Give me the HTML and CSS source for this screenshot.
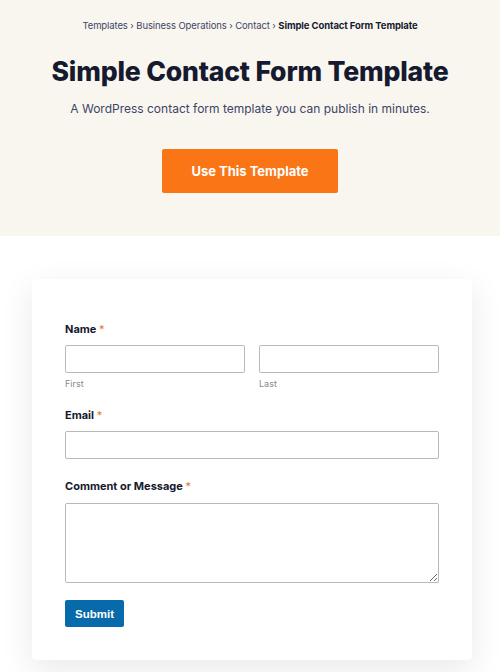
FILE: index.html
```html
<!DOCTYPE html>
<html lang="en">
<head>
<meta charset="utf-8">
<title>Simple Contact Form Template</title>
<link rel="stylesheet" href="styles.css">
</head>
<body>
<header class="hero">
  <nav class="crumbs">
    <a href="#">Templates</a> <span class="sep">›</span> <a href="#">Business Operations</a> <span class="sep">›</span> <a href="#">Contact</a> <span class="sep">›</span> <strong>Simple Contact Form Template</strong>
  </nav>
  <h1 class="title">Simple Contact Form Template</h1>
  <p class="lead">A WordPress contact form template you can publish in minutes.</p>
  <a class="cta" href="#">Use This Template</a>
</header>
<main class="stage">
  <form class="card">
    <div class="field field-name">
      <div class="label">Name <span class="req">*</span></div>
      <div class="row">
        <div class="col">
          <input class="input" type="text">
          <div class="sub">First</div>
        </div>
        <div class="col">
          <input class="input" type="text">
          <div class="sub">Last</div>
        </div>
      </div>
    </div>
    <div class="field field-email">
      <div class="label">Email <span class="req">*</span></div>
      <input class="input" type="email">
    </div>
    <div class="field">
      <div class="label label-area">Comment or Message <span class="req">*</span></div>
      <textarea class="input area"></textarea>
    </div>
    <button class="submit" type="button">Submit</button>
  </form>
</main>
</body>
</html>
```
FILE: styles.css
```css
* { box-sizing: border-box; }
html, body { margin: 0; padding: 0; }
body {
  font-family: Inter, "Liberation Sans", sans-serif;
  color: #161a2e;
  background: #ffffff;
}
.hero {
  background: #f9f6f0;
  height: 236px;
  display: flex;
  flex-direction: column;
  align-items: center;
  padding-top: 19px;
}
.crumbs {
  font-size: 9.5px;
  line-height: 14px;
  color: #3d4565;
  letter-spacing: -0.1px;
}
.crumbs a { color: #3d4565; text-decoration: none; }
.crumbs strong { color: #161a2e; font-weight: 700; }
.crumbs .sep { font-size: 9px; }
.title {
  margin: 22px 0 0;
  font-size: 26.6px;
  line-height: 32px;
  font-weight: 800;
  letter-spacing: -0.2px;
}
.lead {
  margin: 13px 0 0;
  font-size: 12px;
  line-height: 18px;
  color: #3d4565;
}
.cta {
  margin-top: 31px;
  width: 176px;
  height: 44px;
  display: flex;
  align-items: center;
  justify-content: center;
  background: #fa7516;
  color: #fff;
  border-radius: 2px;
  font-size: 13px;
  font-weight: 700;
  text-decoration: none;
}
.stage {
  padding: 43px 28px 40px 32px;
}
.card {
  width: 440px;
  height: 381px;
  background: #fff;
  border-radius: 4px;
  box-shadow: 0 10px 34px rgba(0,0,0,0.09);
  padding: 43px 33px 0 33px;
  display: flex;
  flex-direction: column;
}
.field { margin-bottom: 19px; }
.field-name { margin-bottom: 18px; }
.field-email { margin-bottom: 20px; }
.label {
  font-size: 11px;
  line-height: 14px;
  font-weight: 700;
  color: #161a2e;
  margin-bottom: 9px;
}
.label-area { margin-bottom: 10px; }
.req { color: #e27730; font-weight: 400; }
.row { display: grid; grid-template-columns: 180px 180px; column-gap: 14px; }
.input {
  display: block;
  width: 100%;
  height: 28px;
  border: 1px solid #b9b9b9;
  border-radius: 2px;
  background: #fff;
  margin: 0;
  font: inherit;
}
.area { height: 80px; resize: vertical; }
.sub {
  font-size: 9px;
  line-height: 12px;
  color: #8a8a8a;
  margin-top: 5px;
}
.submit {
  align-self: flex-start;
  margin-top: -2px;
  width: 59px;
  height: 27px;
  background: #066aab;
  color: #fff;
  border: none;
  border-radius: 2px;
  font-family: "Liberation Sans", Arial, sans-serif;
  font-size: 11.5px;
  font-weight: 700;
  padding: 0;
}
```
